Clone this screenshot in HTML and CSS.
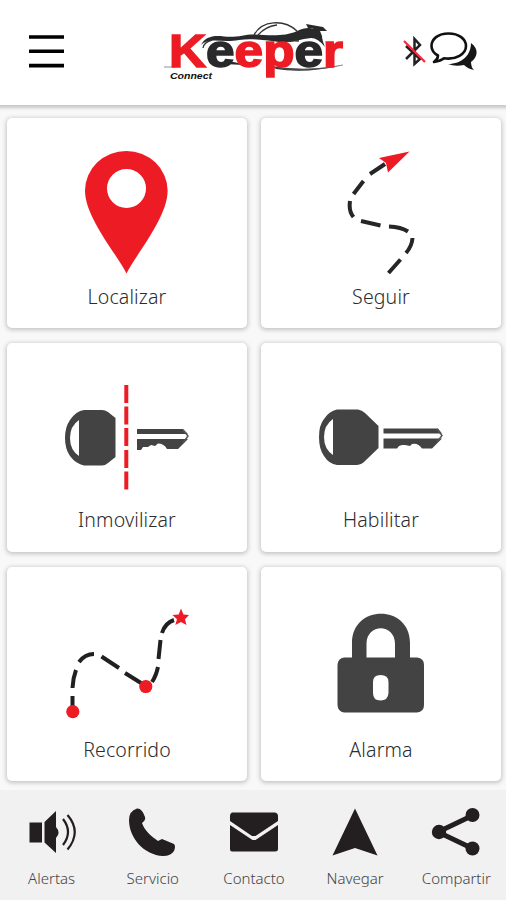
FILE: index.html
```html
<!DOCTYPE html>
<html lang="es">
<head>
<meta charset="utf-8">
<title>Keeper Connect</title>
<link rel="stylesheet" href="styles.css">
</head>
<body>
<header class="header">
  <svg class="menu" viewBox="0 0 35 33"><path d="M0 2H35M0 16.3H35M0 30.6H35" stroke="#000" stroke-width="3.6"/></svg>
  <svg class="logo" viewBox="160 16 190 70">
    <path d="M201 45C205 37 213 35 224 36.500C237 38 245 34 255 34.500C267 35 285 37 297 31C305 27 313 27 320 31L322 36Q322 40 325 47Q318 38 311 38C300 39 292 43 279 42C263 40 251 38 239 40C222 43 209 37 201 45Z" fill="#29282a"/>
    <path d="M254 35C262 20 284 19 297 31M258 35Q266 26 277 25M203 48Q204 42 212 40M281 43Q290 40 299 41" fill="none" stroke="#333" stroke-width="1.300"/>
    <path d="M306 24L323 27L327 31L318 31L312 28L308 28Z" fill="#29282a"/>
    <path d="M223 62Q232 60 244 65L225 64Z M272 66Q303 72 343 65Q306 74 276 69Z" fill="#29282a"/>
    <path d="M164 67H175M270 67Q306 73 343 65" fill="none" stroke="#666" stroke-width=".7"/>
    <text class="brand" x="169" y="67" textLength="174" lengthAdjust="spacingAndGlyphs"><tspan class="red">K</tspan><tspan class="dark">e</tspan><tspan class="red">ep</tspan><tspan class="dark">e</tspan><tspan class="red">r</tspan></text>
    <text class="sub" x="170" y="79" textLength="42" lengthAdjust="spacingAndGlyphs">Connect</text>
  </svg>
  <svg class="status" viewBox="402 30 78 44">
    <path d="M406 59L420 45L414.500 39V64L420 59L406 46" fill="none" stroke="#222" stroke-width="2.500"/>
    <path d="M404 41L425 62" stroke="#f5283b" stroke-width="2.200"/>
    <path d="M471 43C479 49 478 57 471 62Q471 67 474 70Q468 69 464 65Q455 67 448 64C462 64 471 55 471 43Z" fill="#161616"/>
    <path d="M448.500 33.500C438 33.500 431.500 39 431.500 46Q431.500 52 438 55.500Q438 59 434 62Q441 61 444 58.300C456 60 466 54 466 46C466 39 459 33.500 448.500 33.500Z" fill="#fff" stroke="#111" stroke-width="2.600" stroke-linejoin="round"/>
  </svg>
</header>
<main class="grid">
  <a class="card">
    <svg viewBox="7 118 240 164"><path fill-rule="evenodd" d="M126.500 273.500C117 254 85 218 85 190.500A41.300 39.500 0 0 1 167.600 190.500C167.600 218 136 254 126.500 273.500ZM126.500 169A19.500 19.500 0 1 0 126.500 208A19.500 19.500 0 1 0 126.500 169Z" fill="#ed1c24"/></svg>
    <span class="label">Localizar</span>
  </a>
  <a class="card">
    <svg viewBox="261 118 240 164">
      <path d="M385 164L370 174M363.500 181L353.500 194M350 201Q348.500 211 353.500 217M361 221L380.500 225.500M389 226.500Q401 227 408 231.500M412.500 238Q412 246 406 253M400.500 259.500L388.500 273" fill="none" stroke="#262626" stroke-width="4"/>
      <path d="M409.500 151.500L379 158L386 163L388 172.500Z" fill="#ed1c24"/>
    </svg>
    <span class="label">Seguir</span>
  </a>
  <a class="card">
    <svg viewBox="7 343 240 162">
      <path fill-rule="evenodd" d="M84 410H102Q105 410 108 412L115.500 418V457L108 463Q105 465.500 102 465.500H84Q76 464 70 456Q65 449 65 438T70 420Q76 411 84 410ZM79 420Q70 426 70 438T79 456Z" fill="#434343"/>
      <path d="M137 429H183L188 434H137ZM137 439H188L178 449H167Q164 443.500 158 443.500L155 446L151 445L148 447H143L141 450H137Z" fill="#434343"/>
      <path d="M183 430L188 436L183 443" fill="none" stroke="#555" stroke-width="1.500"/>
      <path d="M126.300 385V403M126.300 406.500V424.500M126.300 428V446M126.300 450V468M126.300 471.500V489.500" stroke="#ed1c24" stroke-width="4"/>
    </svg>
    <span class="label">Inmovilizar</span>
  </a>
  <a class="card">
    <svg viewBox="261 343 240 162">
      <path fill-rule="evenodd" d="M337 409.500H358Q362 410 365 413L378.500 426V448L365 461Q362 464.500 357 465H337Q329 464 324 456Q319 449 319 437T324 419Q329 411 337 409.500ZM333 419Q324 425 324 437T333 455Z" fill="#434343"/>
      <path d="M383.500 428.500H438L442 433.500H383.500ZM383.500 438.500H442L432 448.500H422Q418 442.500 412 444L410 446L405 445L402 445L399 446L397 448.500H383.500Z" fill="#434343"/>
      <path d="M437 429L442 435.500L437 442" fill="none" stroke="#555" stroke-width="1.500"/>
    </svg>
    <span class="label">Habilitar</span>
  </a>
  <a class="card">
    <svg viewBox="7 567 240 168">
      <path d="M72.500 707V696M72.500 688Q73 678 76 670M79 662Q85 654 94 654M101.500 656.500L119 668M125 673L141 683M152 682Q156 676 158 667M158.500 659L160.500 640M162 633Q165 623 174 620" fill="none" stroke="#202020" stroke-width="4"/>
      <circle cx="72.800" cy="711.700" r="6.600" fill="#ed1c24"/><circle cx="145.800" cy="686.500" r="6.600" fill="#ed1c24"/>
      <path d="M181 608.500L183.500 614.500L189 615L185 619.300L186.500 625L181 622L175.300 625L177 619.300L172.500 615L178.700 614.500Z" fill="#ed1c24"/>
    </svg>
    <span class="label">Recorrido</span>
  </a>
  <a class="card">
    <svg viewBox="261 567 240 168"><path fill-rule="evenodd" d="M352 657.500V643C352 604 410 604 410 643V657.500H417Q424 658 424 665V705Q424 712 417 712.500H344Q338 712 337.500 705V665Q338 658 344 657.500ZM366.500 657.500H395V644C395 623 366.500 623 366.500 644ZM380.500 675Q373 675 373 682V693Q373 700.500 380.500 700.500T388.500 693V682Q388.500 675 380.500 675Z" fill="#434343"/></svg>
    <span class="label">Alarma</span>
  </a>
</main>
<nav class="nav">
  <a class="tab"><svg viewBox="0 0 52 50"><path d="M3.500 15.500H16V35.500H3.500ZM18.500 15L30 4V20Q35 25.500 30 31V46L18.500 35.500Z" fill="#231f20"/><path d="M37 12Q47 25 37 38M41.500 8Q56 25 41.500 42.500" fill="none" stroke="#231f20" stroke-width="2.200"/></svg><span>Alertas</span></a>
  <a class="tab"><svg viewBox="0 0 52 50"><path d="M10 1.500Q15 1 18 10Q19 13 15 16C17 23 25 30 31 34L35 32L47 37Q49 39 47 44Q44 49 36 49C17 48 2 31 2 13Q2 4 10 1.500Z" fill="#231f20"/></svg><span>Servicio</span></a>
  <a class="tab"><svg viewBox="0 0 52 50"><path d="M4 5.500H47Q50 6 50 9V14L27.500 29H24L2 14V9Q2 6 4 5.500ZM2 18L24.500 33H27.500L50 18V42Q50 44.500 47 44.500H4Q2 44.500 2 42Z" fill="#231f20"/></svg><span>Contacto</span></a>
  <a class="tab"><svg viewBox="0 0 52 50"><path d="M26 1.500L48.500 48.500L26 41L3.500 48.500Z" fill="#231f20"/></svg><span>Navegar</span></a>
  <a class="tab"><svg viewBox="0 0 52 50"><path d="M42.500 8.500L8 25L42.500 41.500" fill="none" stroke="#231f20" stroke-width="5"/><g fill="#231f20"><circle cx="42.500" cy="8" r="7"/><circle cx="9" cy="25" r="7.200"/><circle cx="42.500" cy="41.500" r="7"/></g></svg><span>Compartir</span></a>
</nav>
</body>
</html>
```
FILE: styles.css
```css
* { box-sizing: border-box; }
body {
  margin: 0;
  width: 506px;
  height: 900px;
  overflow: hidden;
  display: flex;
  flex-direction: column;
  background: #f8f8f8;
  font-family: "Noto Sans", "Open Sans", sans-serif;
  font-weight: 300;
}
svg { display: block; }
.header {
  height: 105px;
  flex: none;
  display: flex;
  background: #fff;
  box-shadow: 0 1px 3px 2px #c8c8c8;
}
.menu { width: 35px; height: 33px; margin: 35px 0 0 29px; }
.logo { width: 190px; height: 70px; margin: 16px 0 0 96px; }
.status { width: 78px; height: 44px; margin: 30px 0 0 52px; }
.brand {
  font: 700 47px "Liberation Sans", Arial, sans-serif;
  stroke-width: 1.6px;
}
.dark { fill: #29282a; stroke: #29282a; }
.red { fill: #ed1c24; stroke: #ed1c24; }
.sub { font: italic 700 9px "Liberation Sans", sans-serif; fill: #111; }
.grid {
  display: grid;
  grid-template-columns: 240px 240px;
  grid-template-rows: 210px 209px 214px;
  gap: 15px 14px;
  padding: 13px 5px 9px 7px;
}
.card {
  display: flex;
  flex-direction: column;
  border-radius: 5px;
  background: #fff;
  box-shadow: 0 1px 4px 1px #c4c4c4;
}
.card svg { width: 100%; flex: none; }
.label {
  color: #2c2c2c;
  font-size: 19.5px;
  letter-spacing: 0.15px;
  line-height: 30px;
  text-align: center;
}
.nav {
  height: 110px;
  flex: none;
  display: flex;
  background: #f1f1f1;
  padding-left: 1px;
}
.tab {
  width: 101.200px;
  flex: none;
  display: flex;
  flex-direction: column;
  align-items: center;
  padding-top: 17px;
  color: #444;
  font-size: 15px;
  line-height: 22px;
}
.tab svg { width: 52px; height: 50px; margin-bottom: 10px; }
```
